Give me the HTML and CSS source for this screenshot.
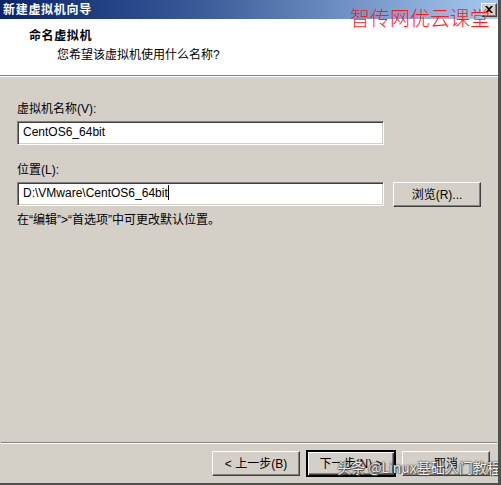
FILE: index.html
```html
<!DOCTYPE html>
<html lang="zh-CN">
<head>
<meta charset="utf-8">
<title>新建虚拟机向导</title>
<link rel="stylesheet" href="styles.css">
</head>
<body>
<div class="window">
  <div class="titlebar">
    <span class="title">新建虚拟机向导</span>
    <span class="close" aria-label="关闭">
      <svg width="8" height="7" viewBox="0 0 8 7"><path d="M0 0h2l2 2 2-2h2L5 3.5 8 7H6L4 5 2 7H0l3-3.5z" fill="#000"/></svg>
    </span>
  </div>
  <div class="header">
    <div class="heading">命名虚拟机</div>
    <div class="subtitle">您希望该虚拟机使用什么名称?</div>
  </div>
  <div class="content">
    <label class="label">虚拟机名称(V):</label>
    <div class="row">
      <div class="input">CentOS6_64bit</div>
    </div>
    <label class="label label-2">位置(L):</label>
    <div class="row">
      <div class="input">D:\VMware\CentOS6_64bit<span class="caret"></span></div>
      <div class="btn btn-browse">浏览(R)...</div>
    </div>
    <div class="hint">在“编辑”&gt;“首选项”中可更改默认位置。</div>
  </div>
  <div class="footer">
    <div class="btn">&lt; 上一步(B)</div>
    <div class="btn btn-default">下一步(N) &gt;</div>
    <div class="btn">取消</div>
  </div>
  <div class="wm-top">智传网优云课堂</div>
  <div class="wm-bottom">头条 @Linux基础入门教程</div>
</div>
</body>
</html>
```
FILE: styles.css
```css
html, body {
  margin: 0;
  padding: 0;
  background: #d4d0c8;
}
body {
  font-family: "Liberation Sans", "Noto Sans CJK SC", sans-serif;
  font-size: 12px;
  color: #000;
}
.window {
  position: relative;
  width: 501px;
  height: 485px;
  box-sizing: border-box;
  background: #d4d0c8;
  border-right: 3px solid #505050;
  border-bottom: 2px solid #505050;
  display: flex;
  flex-direction: column;
  overflow: hidden;
}
.titlebar {
  height: 19px;
  flex: none;
  display: flex;
  align-items: center;
  background: linear-gradient(to right, #0a246a 0%, #3a5a98 40%, #a6caf0 100%);
}
.title {
  color: #fff;
  font-weight: bold;
  font-size: 12px;
  letter-spacing: 0.7px;
  padding-left: 3px;
  line-height: 14px;
}
.close {
  margin-left: auto;
  margin-right: 1px;
  width: 16px;
  height: 14px;
  box-sizing: border-box;
  background: #d4d0c8;
  border: 1px solid;
  border-color: #fff #404040 #404040 #fff;
  box-shadow: inset -1px -1px #808080;
  display: flex;
  align-items: center;
  justify-content: center;
}
.header {
  flex: none;
  height: 58px;
  box-sizing: border-box;
  background: #fff;
  padding-top: 10px;
  border-bottom: 1px solid #fff;
  box-shadow: inset 0 -1px #808080;
}
.heading {
  font-weight: bold;
  letter-spacing: 0.6px;
  line-height: 14px;
  padding-left: 29px;
}
.subtitle {
  line-height: 14px;
  padding-left: 57px;
  margin-top: 5px;
}
.content {
  flex: 1;
  padding: 25px 0 0 17px;
  display: flex;
  flex-direction: column;
}
.label {
  line-height: 14px;
  display: block;
}
.label-2 {
  margin-top: 18px;
}
.row {
  display: flex;
  gap: 9px;
  margin-top: 5px;
}
.input {
  width: 367px;
  height: 24px;
  box-sizing: border-box;
  background: #fff;
  border: 1px solid;
  border-color: #808080 #fff #fff #808080;
  box-shadow: inset 1px 1px #404040, inset -1px -1px #d4d0c8;
  padding-left: 5px;
  line-height: 21px;
  white-space: nowrap;
}
.caret {
  display: inline-block;
  width: 1px;
  height: 15px;
  background: #000;
  vertical-align: -3px;
}
.btn {
  width: 88px;
  height: 25px;
  box-sizing: border-box;
  border: 1px solid;
  border-color: #fff #404040 #404040 #fff;
  box-shadow: inset -1px -1px #808080;
  background: #d4d0c8;
  display: flex;
  align-items: center;
  justify-content: center;
  line-height: 14px;
}
.btn-browse {
  width: 88px;
}
.btn-default {
  outline: 1px solid #000;
  outline-offset: 0;
  border-color: #000;
  box-shadow: inset 1px 1px #fff, inset -1px -1px #404040, inset -2px -2px #808080;
}
.hint {
  line-height: 14px;
  margin-top: 6px;
}
.footer {
  flex: none;
  display: flex;
  justify-content: flex-end;
  gap: 7px;
  padding: 8px 7px 7px 0;
  margin-left: 1px;
  margin-right: 1px;
  border-top: 1px solid #808080;
  box-shadow: inset 0 1px #fff;
}
.wm-top {
  position: absolute;
  left: 350px;
  top: 5px;
  color: #ff1a1a;
  font-family: "Noto Sans CJK SC", sans-serif;
  font-size: 20px;
  font-weight: 300;
  line-height: 26px;
  white-space: nowrap;
}
.wm-bottom {
  position: absolute;
  left: 337px;
  top: 458px;
  color: rgba(255, 255, 255, 0.92);
  font-family: "Noto Sans CJK SC", sans-serif;
  font-size: 14px;
  line-height: 18px;
  white-space: nowrap;
  text-shadow: 0 0 1px #333, 0 0 2px #333, 1px 1px 1px #555;
}
```
